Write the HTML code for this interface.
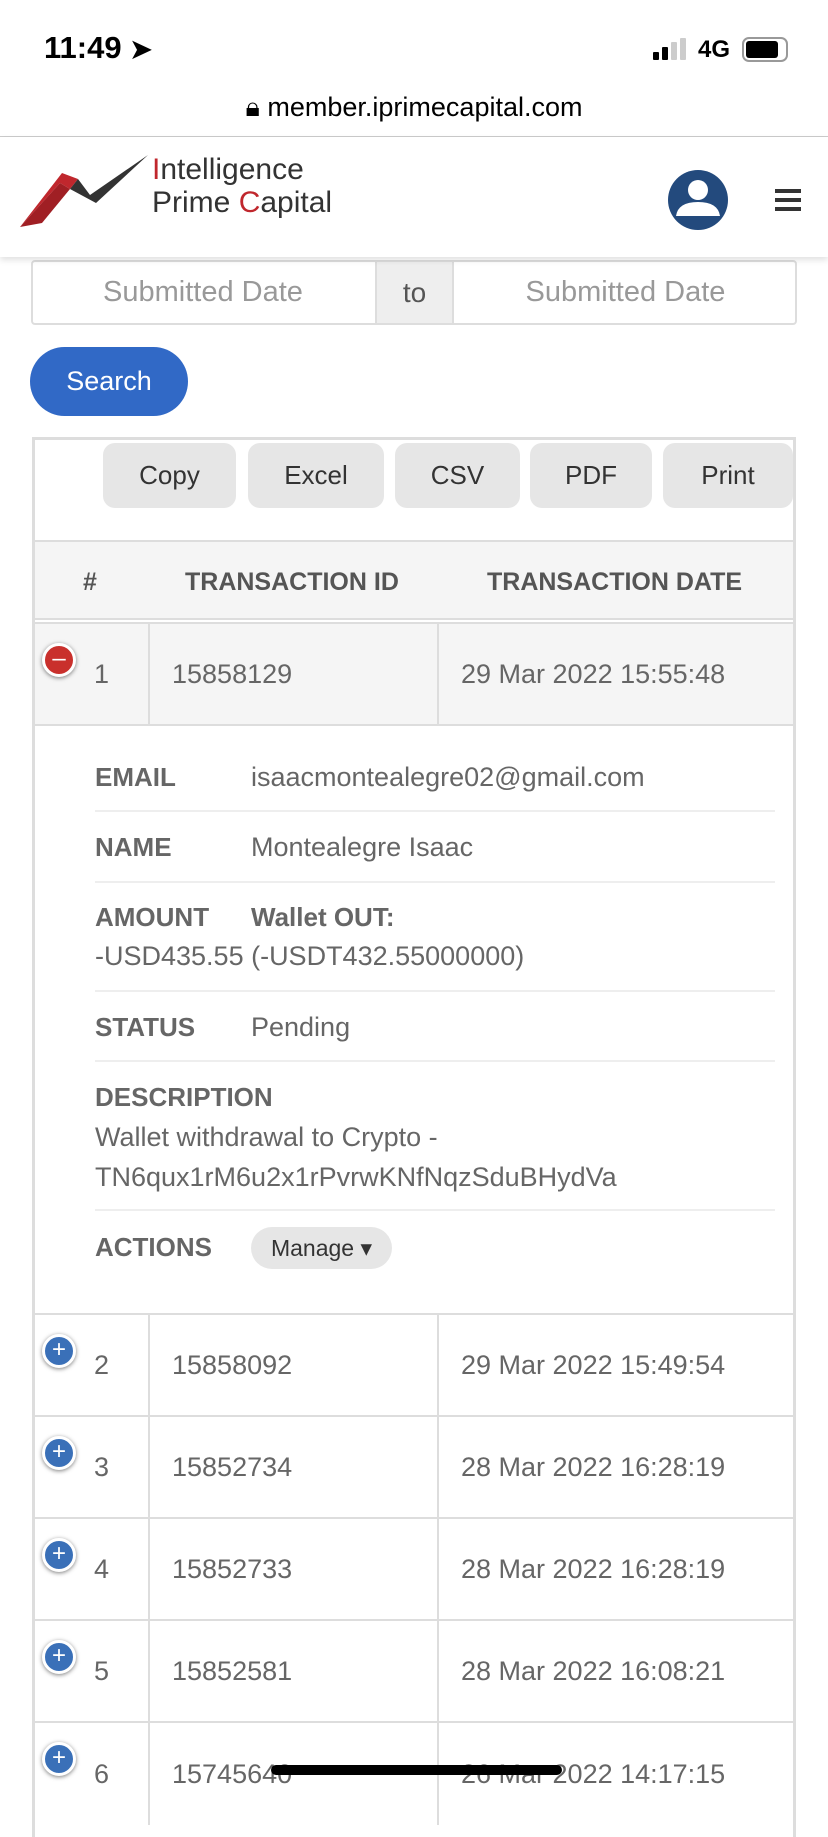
<!DOCTYPE html>
<html><head><meta charset="utf-8"><style>
*{box-sizing:border-box;margin:0;padding:0}
body{width:828px;height:1792px;overflow:hidden;background:#fff;font-family:"Liberation Sans",sans-serif;color:#666;position:relative}
.a{position:absolute}
.btn{position:absolute;top:443px;height:65px;background:#e6e6e6;border-radius:12px;font-size:26px;color:#333;display:flex;align-items:center;justify-content:center}
.row{position:absolute;left:35px;width:758px;height:102px;border-bottom:2px solid #ddd;font-size:27px}
.row div{position:absolute;top:0;height:100%;display:flex;align-items:center}
.lbl{position:absolute;left:95px;font-weight:bold;font-size:26px;color:#666}
.val{position:absolute;left:251px;font-size:27px;color:#666}
.hl{position:absolute;left:95px;width:680px;height:2px;background:#eee}
.ic{position:absolute;left:42px;width:34px;height:34px;border-radius:50%;border:3px solid #fff;box-shadow:0 1px 4px rgba(0,0,0,.5);color:#fff;font-size:24px;line-height:26px;text-align:center}
</style></head><body>
<div class="a" style="left:44px;top:30px;font-size:31px;font-weight:bold;color:#000">11:49 <span style="font-size:26px">➤</span></div>
<div class="a" style="left:653px;top:38px;width:40px;height:24px">
<div class="a" style="left:0;top:14px;width:6px;height:8px;background:#000;border-radius:1px"></div>
<div class="a" style="left:9px;top:9px;width:6px;height:13px;background:#000;border-radius:1px"></div>
<div class="a" style="left:18px;top:4px;width:6px;height:18px;background:#ccc;border-radius:1px"></div>
<div class="a" style="left:27px;top:0;width:6px;height:22px;background:#ccc;border-radius:1px"></div></div>
<div class="a" style="left:698px;top:36px;font-size:24px;color:#000;font-weight:bold">4G</div>
<div class="a" style="left:742px;top:37px;width:46px;height:25px;border:2px solid #999;border-radius:7px"><div style="margin:2px;width:32px;height:17px;background:#000;border-radius:3px"></div></div>
<div class="a" style="left:0;top:92px;width:828px;text-align:center;font-size:27px;color:#000">🔒︎ member.iprimecapital.com</div>
<div class="a" style="left:0;top:136px;width:828px;height:1px;background:#ccc"></div>
<div class="a" style="left:0;top:137px;width:828px;height:120px;background:#fff;box-shadow:0 3px 6px rgba(0,0,0,.12);z-index:2">
<svg class="a" style="left:20px;top:18px" width="130" height="76" viewBox="0 0 130 76"><path d="M0 72 L42 18 L58 24 L50 34 L40 28 Z" fill="#c0272d"/><path d="M40 28 L50 34 L22 68 L0 72 Z" fill="#a01f24"/><path d="M50 34 L58 24 L70 40 L128 0 L76 48 Z" fill="#333"/></svg>
<div class="a" style="left:152px;top:16px;font-size:30px;color:#333;line-height:33px"><span style="color:#c0272d">I</span>ntelligence<br>Prime <span style="color:#c0272d">C</span>apital</div>
<svg class="a" style="left:668px;top:33px" width="60" height="60" viewBox="0 0 60 60"><circle cx="30" cy="30" r="30" fill="#234a7d"/><circle cx="30" cy="20" r="10" fill="#fff"/><path d="M8 46 Q10 32 30 32 Q50 32 52 46 Z" fill="#fff"/></svg>
<div class="a" style="left:775px;top:52px;width:26px;height:4px;background:#333;box-shadow:0 9px 0 #333,0 18px 0 #333"></div>
</div>
<div class="a" style="left:31px;top:260px;width:766px;height:65px;border:2px solid #ddd;border-radius:4px"></div>
<div class="a" style="left:375px;top:260px;width:79px;height:65px;background:#eee;border:2px solid #ddd;font-size:28px;color:#555;display:flex;align-items:center;justify-content:center">to</div>
<div class="a" style="left:31px;top:276px;width:344px;text-align:center;font-size:29px;color:#999">Submitted Date</div>
<div class="a" style="left:454px;top:276px;width:343px;text-align:center;font-size:29px;color:#999">Submitted Date</div>
<div class="a" style="left:30px;top:347px;width:158px;height:69px;background:#3169c6;border-radius:35px;color:#fff;font-size:27px;display:flex;align-items:center;justify-content:center">Search</div>
<div class="a" style="left:32px;top:437px;width:764px;height:1400px;border:3px solid #ddd;border-bottom:none"></div>
<div class="btn" style="left:103px;width:133px">Copy</div>
<div class="btn" style="left:248px;width:136px">Excel</div>
<div class="btn" style="left:395px;width:125px">CSV</div>
<div class="btn" style="left:530px;width:122px">PDF</div>
<div class="btn" style="left:663px;width:130px">Print</div>
<div class="a" style="left:35px;top:540px;width:758px;height:80px;background:#f5f5f5;border-top:2px solid #ddd;border-bottom:2px solid #ddd;font-weight:bold;font-size:25px;color:#555">
<div class="a" style="left:48px;top:26px">#</div><div class="a" style="left:150px;top:26px">TRANSACTION ID</div><div class="a" style="left:452px;top:26px">TRANSACTION DATE</div></div>
<div class="row" style="top:622px;height:104px;background:#f5f5f5;border-top:2px solid #ddd">
<div style="left:59px">1</div><div style="left:113px;border-left:2px solid #ddd;padding-left:22px;width:290px">15858129</div><div style="left:402px;border-left:2px solid #ddd;padding-left:22px">29 Mar 2022 15:55:48</div></div>
<div class="ic" style="top:643px;background:#c9302c">–</div>
<div class="lbl" style="top:762px">EMAIL</div><div class="val" style="top:762px">isaacmontealegre02@gmail.com</div>
<div class="hl" style="top:810px"></div>
<div class="lbl" style="top:832px">NAME</div><div class="val" style="top:832px">Montealegre Isaac</div>
<div class="hl" style="top:881px"></div>
<div class="lbl" style="top:902px">AMOUNT</div><div class="val" style="top:902px;font-weight:bold;font-size:26px">Wallet OUT:</div>
<div class="val" style="left:95px;top:941px">-USD435.55 (-USDT432.55000000)</div>
<div class="hl" style="top:990px"></div>
<div class="lbl" style="top:1012px">STATUS</div><div class="val" style="top:1012px">Pending</div>
<div class="hl" style="top:1060px"></div>
<div class="lbl" style="top:1082px">DESCRIPTION</div>
<div class="val" style="left:95px;top:1122px">Wallet withdrawal to Crypto -</div>
<div class="val" style="left:95px;top:1162px">TN6qux1rM6u2x1rPvrwKNfNqzSduBHydVa</div>
<div class="hl" style="top:1209px"></div>
<div class="lbl" style="top:1232px">ACTIONS</div>
<div class="a" style="left:251px;top:1227px;width:141px;height:42px;background:#e6e6e6;border-radius:21px;font-size:23px;color:#333;display:flex;align-items:center;justify-content:center">Manage ▾</div>
<div class="a" style="left:32px;top:1313px;width:764px;height:2px;background:#ddd"></div>
<div class="row" style="top:1315px"><div style="left:59px">2</div><div style="left:113px;border-left:2px solid #ddd;padding-left:22px;width:290px">15858092</div><div style="left:402px;border-left:2px solid #ddd;padding-left:22px">29 Mar 2022 15:49:54</div></div>
<div class="row" style="top:1417px"><div style="left:59px">3</div><div style="left:113px;border-left:2px solid #ddd;padding-left:22px;width:290px">15852734</div><div style="left:402px;border-left:2px solid #ddd;padding-left:22px">28 Mar 2022 16:28:19</div></div>
<div class="row" style="top:1519px"><div style="left:59px">4</div><div style="left:113px;border-left:2px solid #ddd;padding-left:22px;width:290px">15852733</div><div style="left:402px;border-left:2px solid #ddd;padding-left:22px">28 Mar 2022 16:28:19</div></div>
<div class="row" style="top:1621px"><div style="left:59px">5</div><div style="left:113px;border-left:2px solid #ddd;padding-left:22px;width:290px">15852581</div><div style="left:402px;border-left:2px solid #ddd;padding-left:22px">28 Mar 2022 16:08:21</div></div>
<div class="row" style="top:1723px;border-bottom:none"><div style="left:59px">6</div><div style="left:113px;border-left:2px solid #ddd;padding-left:22px;width:290px">15745640</div><div style="left:402px;border-left:2px solid #ddd;padding-left:22px">26 Mar 2022 14:17:15</div></div>
<div class="ic" style="top:1334px;background:#3a70b8">+</div>
<div class="ic" style="top:1436px;background:#3a70b8">+</div>
<div class="ic" style="top:1538px;background:#3a70b8">+</div>
<div class="ic" style="top:1640px;background:#3a70b8">+</div>
<div class="ic" style="top:1742px;background:#3a70b8">+</div>
<div class="a" style="left:271px;top:1765px;width:291px;height:10px;background:#000;border-radius:5px"></div>
</body></html>
